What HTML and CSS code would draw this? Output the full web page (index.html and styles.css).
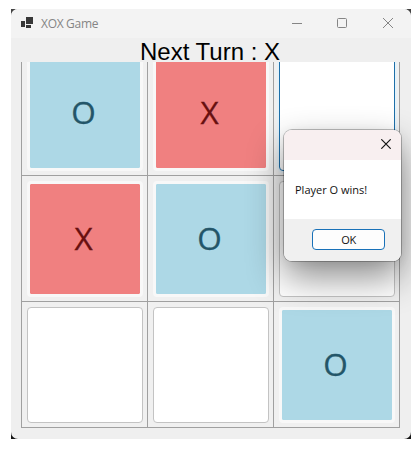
FILE: index.html
```html
<!DOCTYPE html>
<html lang="en">
<head>
<meta charset="utf-8">
<title>XOX Game</title>
<link rel="stylesheet" href="styles.css">
</head>
<body>
<div class="frame">
  <main class="window">
    <header class="titlebar">
      <svg class="app-icon" width="12" height="11" viewBox="0 0 12 11"><path d="M5 0h7v7H5zM0 4h4v6H0zM5 8h5v3H5z" fill="#383838"/></svg>
      <h1 class="title">XOX Game</h1>
      <svg class="controls" width="102" height="12" viewBox="0 0 102 12" fill="none" stroke="#858585"><path d="M0 6.5h10M91 1l10 10M101 1l-10 10"/><rect x="45.5" y="1.5" width="9" height="9" rx="1"/></svg>
    </header>
    <p class="status">Next Turn : X</p>
    <div class="board-view">
      <div class="board">
        <div class="cell"><div class="tile o">O</div></div>
        <div class="cell"><div class="tile x">X</div></div>
        <div class="cell"><div class="tile empty focused"></div></div>
        <div class="cell"><div class="tile x">X</div></div>
        <div class="cell"><div class="tile o">O</div></div>
        <div class="cell"><div class="tile empty"></div></div>
        <div class="cell"><div class="tile empty"></div></div>
        <div class="cell"><div class="tile empty"></div></div>
        <div class="cell"><div class="tile o">O</div></div>
      </div>
    </div>
    <section class="dialog">
      <div class="dialog-head"><svg width="10" height="10" viewBox="0 0 10 10" fill="none" stroke="#161616" stroke-width="1.2"><path d="M.3.3l9.4 9.4M9.7.3L.3 9.7"/></svg></div>
      <p class="dialog-body">Player O wins!</p>
      <div class="dialog-foot"><button class="ok">OK</button></div>
    </section>
  </main>
</div>
</body>
</html>
```
FILE: styles.css
```css
* { box-sizing: border-box; }
body { margin: 0; background: #fff; font-family: "Open Sans", sans-serif; }
p, h1 { margin: 0; font-weight: 400; }
.frame {
  width: 400px;
  height: 430px;
  margin: 9px 0 0 11px;
  background: linear-gradient(#444 50%, #151515 50%);
}
.window {
  position: relative;
  width: 400px;
  height: 430px;
  border-radius: 7px;
  background: #efefef;
  overflow: hidden;
}
.titlebar {
  display: flex;
  align-items: center;
  height: 29px;
  padding: 0 17px 0 10px;
  background: #f3f3f3;
}
.app-icon { margin-top: -2px; }
.title {
  margin-left: 8px;
  color: #858585;
  font-size: 12px;
  line-height: 28px;
  letter-spacing: -0.3px;
}
.controls { margin-left: auto; margin-top: -1px; }
.status {
  height: 24px;
  padding-left: 129px;
  font: 24px/28px "Liberation Sans", Arial, sans-serif;
  color: #000;
  white-space: nowrap;
}
.board-view {
  display: flex;
  align-items: flex-end;
  height: 366px;
  margin-left: 10px;
  width: 379px;
  overflow: hidden;
}
.board {
  display: grid;
  grid-template: repeat(3, 125px) / repeat(3, 125px);
  gap: 1px;
  padding: 1px;
  background: #a0a0a0;
  flex: none;
}
.cell { padding: 5px; background: #f0f0f0; }
.tile {
  width: 116px;
  height: 116px;
  padding-right: 3px;
  border: 3px solid #f8f8f8;
  border-radius: 4px;
  font-size: 31.5px;
  line-height: 107px;
  text-align: center;
  -webkit-text-stroke: 0.3px currentColor;
}
.o { background: #add8e6; color: #235568; background-clip: padding-box; }
.x { background: #f08080; color: #681010; background-clip: padding-box; }
.empty { background: #fff; border: 1px solid #c3c3c3; }
.focused { border-color: #1d6fa9; box-shadow: 0 0 0 2px #e5f1f8; }
.dialog {
  position: absolute;
  left: 273px;
  top: 121px;
  width: 117px;
  height: 131px;
  border-radius: 8px;
  background: #fff;
  overflow: hidden;
  box-shadow: 0 0 0 1px rgba(0, 0, 0, .25), 0 16px 36px rgba(0, 0, 0, .46), 0 2px 12px rgba(0, 0, 0, .06);
}
.dialog-head {
  display: flex;
  justify-content: flex-end;
  height: 30px;
  padding: 9px 10px;
  background: #f8eff0;
}
.dialog-body {
  height: 59px;
  padding-left: 11px;
  font-size: 11px;
  line-height: 60px;
  color: #111;
  white-space: nowrap;
}
.dialog-foot {
  display: flex;
  justify-content: flex-end;
  height: 42px;
  padding: 10px 16px 11px;
  background: #f0f0f0;
}
.ok {
  width: 73px;
  height: 21px;
  padding: 0;
  border: 1px solid #1971b8;
  border-radius: 4px;
  background: #fdfdfd;
  font: 11px/19px "Open Sans", sans-serif;
  letter-spacing: -0.3px;
  color: #111;
}
```
